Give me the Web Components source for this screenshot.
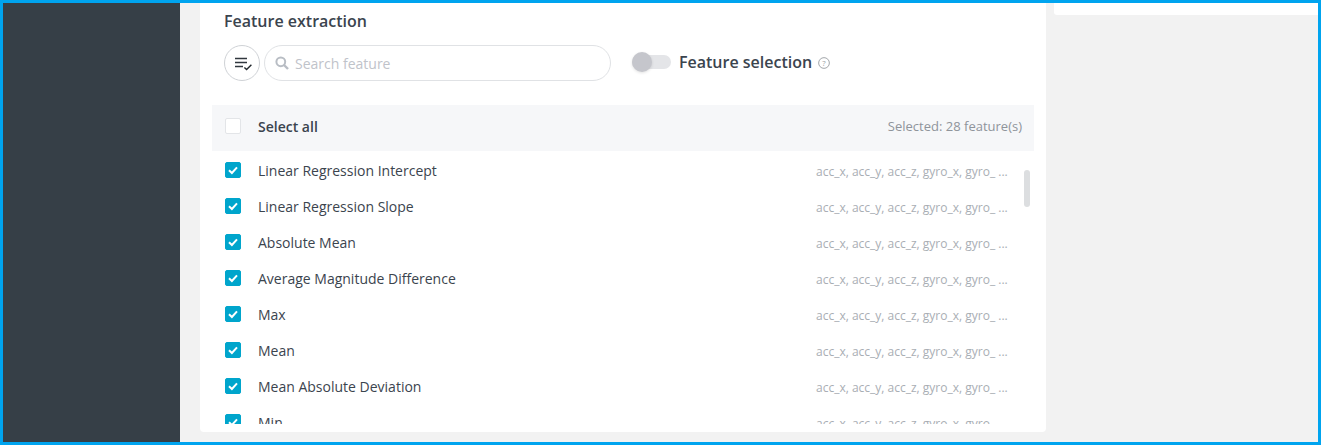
<!DOCTYPE html>
<html lang="en"><head><meta charset="utf-8"><title>Feature extraction</title>
<style>html,body{margin:0;padding:0;background:#f2f2f2;font-family:"Open Sans",sans-serif}</style></head>
<body>
<app-frame>
  <feature-card>
    <feature-row>Linear Regression Intercept</feature-row>
    <feature-row>Linear Regression Slope</feature-row>
    <feature-row>Absolute Mean</feature-row>
    <feature-row>Average Magnitude Difference</feature-row>
    <feature-row>Max</feature-row>
    <feature-row>Mean</feature-row>
    <feature-row>Mean Absolute Deviation</feature-row>
    <feature-row>Min</feature-row>
  </feature-card>
</app-frame>
<script>
function def(name, html){
  customElements.define(name, class extends HTMLElement{
    constructor(){super();this.attachShadow({mode:'open'}).innerHTML=html;}
  });
}
def('app-frame',`<style>
:host{display:grid;grid-template-columns:177px 1fr;box-sizing:border-box;width:1321px;height:445px;border:3px solid #00a4ef;overflow:hidden;background:#f2f2f2}
.side{background:#363f47}
.main{display:flex;align-items:flex-start;gap:8px;padding-left:20px;min-width:0}
.right{flex:1;height:12px;background:#fff;border-bottom-left-radius:3px}
</style><div class="side"></div><div class="main"><slot></slot><div class="right"></div></div>`);

def('check-box',`<style>
:host{display:block;box-sizing:border-box;width:16px;height:16px;border-radius:2px;background:#fff;border:1px solid #e3e5e8;flex:none}
:host([on]){background:#00a5cc;border-color:#00a5cc}
svg{display:none;position:relative;left:-1px;top:-1px}
:host([on]) svg{display:block}
</style><svg width="16" height="16" viewBox="0 0 16 16"><path d="M4 8.2 6.9 11 12 5.3" fill="none" stroke="#fff" stroke-width="2"/></svg>`);

def('sort-button',`<style>
:host{display:flex;align-items:center;justify-content:center;box-sizing:border-box;width:36px;height:36px;border:1px solid #cfd2d6;border-radius:50%;flex:none;background:#fff}
svg{position:relative;left:1px}
</style><svg width="18" height="16" viewBox="0 0 18 16"><path d="M1 3.5H13M1 7.5H13M1 11.5H9" stroke="#30373e" stroke-width="1.7" fill="none"/><path d="M10.4 12.4 12.6 14.6 17.4 9.8" stroke="#22282d" stroke-width="1.4" fill="none"/></svg>`);

def('search-box',`<style>
:host{display:flex;align-items:center;box-sizing:border-box;width:347px;height:36px;border:1px solid #e0e2e5;border-radius:18px;padding-left:10px;gap:6px;margin-left:4px;flex:none;font-size:14px;color:#bfc3ca}
svg{flex:none}
</style><svg width="14" height="14" viewBox="0 0 14 14"><circle cx="5.8" cy="5.8" r="4.4" fill="none" stroke="#b8bdc4" stroke-width="2"/><path d="M9 9 13 13" stroke="#b8bdc4" stroke-width="2.4"/></svg><span>Search feature</span>`);

def('toggle-switch',`<style>
:host{display:block;position:relative;width:39px;height:14px;background:#e4e5e8;border-radius:7px;flex:none}
i{position:absolute;left:0;top:-3px;width:20px;height:20px;border-radius:50%;background:#c5c6cc;box-shadow:0 1px 3px rgba(0,0,0,.12)}
</style><i></i>`);

def('feature-row',`<style>
:host{display:flex;align-items:center;height:36px;padding-left:13px;box-sizing:border-box;flex:none;position:relative}
.n{margin-left:17px;font-size:14px;color:#3b444e;flex:1}
.v{font-size:12px;color:#a9aeb4;width:192px;white-space:nowrap;margin-right:26px;position:relative;top:1px}
</style><check-box on></check-box><span class="n"><slot></slot></span><span class="v">acc_x, acc_y, acc_z, gyro_x, gyro_ ...</span>`);

def('feature-card',`<style>
:host{display:flex;flex-direction:column;box-sizing:border-box;width:846px;height:429px;background:#fff;border-bottom-left-radius:4px;border-bottom-right-radius:4px;padding:0 12px;flex:none}
h2{margin:0;font-size:16px;font-weight:600;color:#3b444e;line-height:22px;padding:7px 0 0 12px}
.tools{display:flex;align-items:center;padding-left:12px;margin-top:13px;height:36px}
toggle-switch{margin:-2px 0 0 21px}
.fs{margin:-2px 0 0 8px;font-size:16px;font-weight:600;color:#3b444e}
.q{margin-left:6px;display:block}
.head{display:flex;align-items:center;height:46px;margin-top:24px;background:#f6f7f9;padding:0 12px 0 13px;flex:none}
.head check-box{margin-top:-4px}
.all{margin:-3px 0 0 17px;font-size:14px;font-weight:600;color:#3b444e;flex:1}
.sel{font-size:13px;color:#8f949b;position:relative;top:-2px}
.list{position:relative;height:272px;margin-top:1px;overflow:hidden;display:flex;flex-direction:column}
.bar{position:absolute;right:4px;top:18px;width:6px;height:37px;border-radius:3px;background:#dcdee0}
</style>
<h2>Feature extraction</h2>
<div class="tools"><sort-button></sort-button><search-box></search-box><toggle-switch></toggle-switch><span class="fs">Feature selection</span>
<svg class="q" width="12" height="12" viewBox="0 0 13 13"><circle cx="6.5" cy="6.5" r="5.8" fill="none" stroke="#9a9ea3"/><text x="6.5" y="9.6" font-size="8.5" text-anchor="middle" fill="#9a9ea3" font-family="Open Sans">?</text></svg></div>
<div class="head"><check-box></check-box><span class="all">Select all</span><span class="sel">Selected: 28 feature(s)</span></div>
<div class="list"><slot></slot><div class="bar"></div></div>`);
</script>
</body></html>
